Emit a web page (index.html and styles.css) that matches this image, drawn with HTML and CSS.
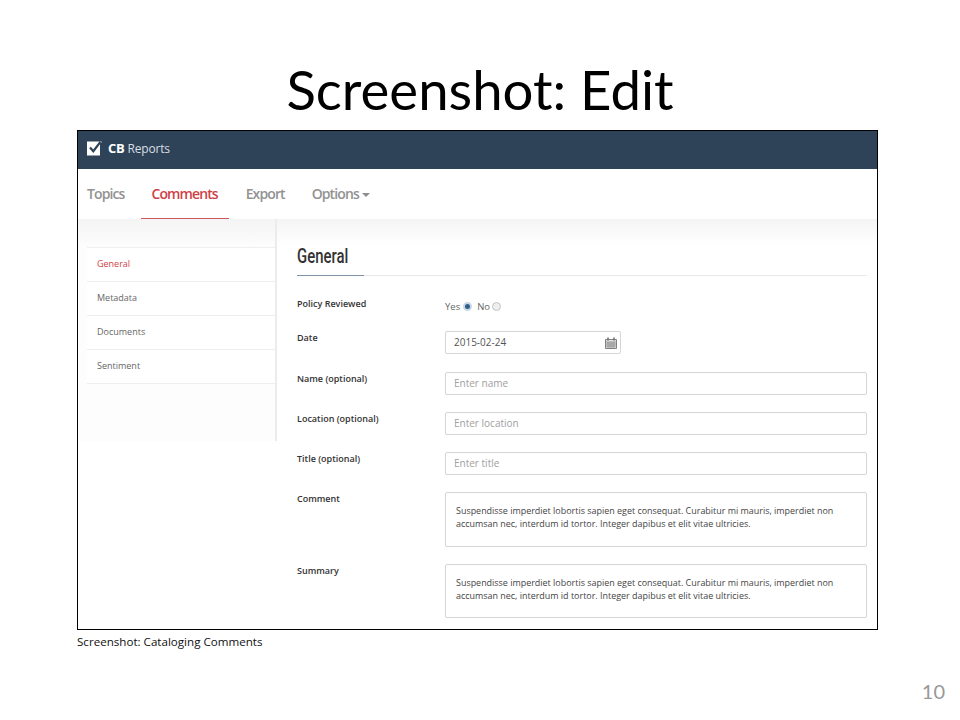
FILE: index.html
```html
<!DOCTYPE html>
<html lang="en">
<head>
    <meta charset="UTF-8">
    <meta name="viewport" content="width=device-width, initial-scale=1.0">
    <title>Screenshot: Edit</title>
    <link rel="stylesheet" href="styles.css">
</head>
<body>
    <div class="slide">
        <h1 class="slide-title">Screenshot: Edit</h1>
        <div class="frame">
            <header class="topbar">
                <svg class="logo-icon" width="16" height="16" viewBox="0 0 16 16">
                    <path d="M1 1.500h13v14H1z" fill="#fff"/>
                    <path d="M4 7.500l3.300 3.700 7.700-10" fill="none" stroke="#2f4358" stroke-width="2.200"/>
                    <path d="M14 1.500h1.500v1.500z" fill="#fff"/>
                </svg>
                <span class="logo-text"><b>CB</b> Reports</span>
            </header>
            <nav class="tabs">
                <a class="tab">Topics</a>
                <a class="tab active">Comments</a>
                <a class="tab">Export</a>
                <a class="tab">Options<i class="caret"></i></a>
            </nav>
            <div class="content">
                <aside class="sidebar">
                    <ul class="side-list">
                        <li class="active">General</li>
                        <li>Metadata</li>
                        <li>Documents</li>
                        <li>Sentiment</li>
                    </ul>
                </aside>
                <main class="main">
                    <h2 class="section-title"><span class="section-name"><span>General</span></span></h2>
                    <form class="form">
                        <div class="row row-policy">
                            <label>Policy Reviewed</label>
                            <div class="radios">
                                Yes <i class="radio on"></i>
                                <span class="radio-no">No</span> <i class="radio"></i>
                            </div>
                        </div>
                        <div class="row row-date">
                            <label>Date</label>
                            <div class="field date">
                                <span>2015-02-24</span>
                                <svg width="12" height="12" viewBox="0 0 12 12">
                                    <path d="M.5 2.500h11v9H.5z" fill="#e2e2e2" stroke="#808080"/>
                                    <path d="M.5 5h11M.5 7h11M.5 9h11M3 5v6M5 5v6M7 5v6M9 5v6" stroke="#808080" stroke-width=".7"/>
                                    <path d="M3 .5v3M9 .5v3" stroke="#707070" stroke-width="1.600"/>
                                </svg>
                            </div>
                        </div>
                        <div class="row">
                            <label>Name (optional)</label>
                            <div class="field placeholder">Enter name</div>
                        </div>
                        <div class="row">
                            <label>Location (optional)</label>
                            <div class="field placeholder">Enter location</div>
                        </div>
                        <div class="row">
                            <label>Title (optional)</label>
                            <div class="field placeholder">Enter title</div>
                        </div>
                        <div class="row">
                            <label>Comment</label>
                            <div class="field area">Suspendisse imperdiet lobortis sapien eget consequat. Curabitur mi mauris, imperdiet non accumsan nec, interdum id tortor. Integer dapibus et elit vitae ultricies.</div>
                        </div>
                        <div class="row">
                            <label>Summary</label>
                            <div class="field area">Suspendisse imperdiet lobortis sapien eget consequat. Curabitur mi mauris, imperdiet non accumsan nec, interdum id tortor. Integer dapibus et elit vitae ultricies.</div>
                        </div>
                    </form>
                </main>
            </div>
        </div>
        <p class="caption">Screenshot: Cataloging Comments</p>
        <div class="page-num">10</div>
    </div>
</body>
</html>
```

FILE: styles.css
```css
body {
    margin: 0;
    background-color: #fff;
    font-family: "Open Sans", sans-serif;
}

.slide {
    width: 960px;
    height: 720px;
    box-sizing: border-box;
    padding-top: 59px;
    overflow: hidden;
}

.slide-title {
    margin: 0 0 11px;
    height: 60px;
    font-family: Lato, sans-serif;
    font-size: 54.5px;
    font-weight: 400;
    line-height: 60px;
    text-align: center;
    color: #000;
}

.frame {
    width: 801px;
    height: 500px;
    margin-left: 77px;
    box-sizing: border-box;
    border: 1px solid #000;
    overflow: hidden;
}

.topbar {
    display: flex;
    align-items: center;
    height: 38px;
    box-sizing: border-box;
    padding: 0 0 4px 8px;
    background-color: #2f4358;
    color: #d8dee3;
}

.logo-icon {
    margin-right: 6px;
}

.logo-text {
    font-size: 12px;
    letter-spacing: -0.2px;
}

.logo-text b {
    font-size: 13px;
    color: #fff;
}

.tabs {
    display: flex;
    height: 50px;
}

.tab {
    padding: 0 11px;
    margin-right: 5px;
    line-height: 49px;
    font-size: 14px;
    font-weight: 600;
    letter-spacing: -0.9px;
    color: #929292;
}

.tab:first-child {
    padding-left: 9px;
}

.tab.active {
    padding-left: 10px;
    margin-left: 1px;
    margin-right: 6px;
    color: #cf4146;
    border-bottom: 1px solid #d0565a;
}

.caret {
    display: inline-block;
    margin-left: 3px;
    vertical-align: middle;
    border-top: 4px solid #8d8d8d;
    border-left: 4px solid transparent;
    border-right: 4px solid transparent;
}

.content {
    display: flex;
}

.sidebar {
    width: 199px;
    height: 222px;
    box-sizing: border-box;
    padding: 28px 0 0 9px;
    border-right: 2px solid #ececec;
    background: linear-gradient(#f4f4f4, #fdfdfd 28px);
}

.side-list {
    margin: 0;
    padding: 0;
    list-style: none;
    background-color: #fff;
    border-top: 1px solid #efefef;
}

.side-list li {
    height: 33px;
    padding-left: 10px;
    border-bottom: 1px solid #eee;
    font-size: 9px;
    line-height: 32px;
    color: #666;
}

.side-list li.active {
    color: #cf4146;
}

.main {
    flex: 1;
    padding: 0 10px 0 20px;
    background: linear-gradient(#f4f4f4, #fff 26px) no-repeat top / 100% 40px;
}

.section-title {
    height: 57px;
    box-sizing: border-box;
    margin: 0 0 21px;
    border-bottom: 1px solid #e8e8e8;
    font-weight: 400;
}

.section-name {
    display: inline-block;
    width: 67px;
    height: 57px;
    box-sizing: border-box;
    padding-top: 24px;
    border-bottom: 1px solid #7f93a6;
    font-family: Roboto, sans-serif;
    font-size: 21px;
    font-weight: 500;
    line-height: 26px;
    color: #333;
}

/* no condensed face installed, so squeeze the heading */
.section-name span {
    display: inline-block;
    transform: scaleX(0.71);
    transform-origin: left;
}

.row {
    display: flex;
    margin-bottom: 17px;
}

.row label {
    width: 148px;
    flex-shrink: 0;
    font-size: 9px;
    font-weight: 600;
    line-height: 13px;
    color: #333;
}

.row-policy {
    height: 21px;
    margin-bottom: 13px;
}

.row-date {
    margin-bottom: 18px;
}

.radios {
    font-size: 9.5px;
    line-height: 19px;
    color: #666;
}

.radio-no {
    margin-left: 3px;
}

.radio {
    display: inline-block;
    width: 9px;
    height: 9px;
    box-sizing: border-box;
    border: 1px solid #c4c4c4;
    border-radius: 50%;
    vertical-align: -1px;
    background-color: #eee;
}

.radio.on {
    border: 2px solid #c9d9e6;
    background-color: #2f5f8a;
}

.field {
    flex: 1;
    height: 23px;
    box-sizing: border-box;
    padding: 0 8px;
    border: 1px solid #d5d5d5;
    border-radius: 2px;
    font-size: 10px;
    line-height: 21px;
    color: #555;
}

.date {
    flex: none;
    display: flex;
    align-items: center;
    justify-content: space-between;
    width: 176px;
    padding-right: 3px;
}

.placeholder {
    color: #a0a0a0;
}

.area {
    height: 55px;
    padding: 11px 10px 0;
    font-size: 8.95px;
    line-height: 13px;
    color: #444;
}

.row:last-child .area {
    height: 54px;
}

.caption {
    margin: 5px 0 0 77px;
    font-size: 11.6px;
    line-height: 14px;
    color: #111;
}

.page-num {
    margin: 30px 15px 0 0;
    font-family: Lato, sans-serif;
    font-size: 20px;
    line-height: 24px;
    text-align: right;
    color: #999;
}
```
